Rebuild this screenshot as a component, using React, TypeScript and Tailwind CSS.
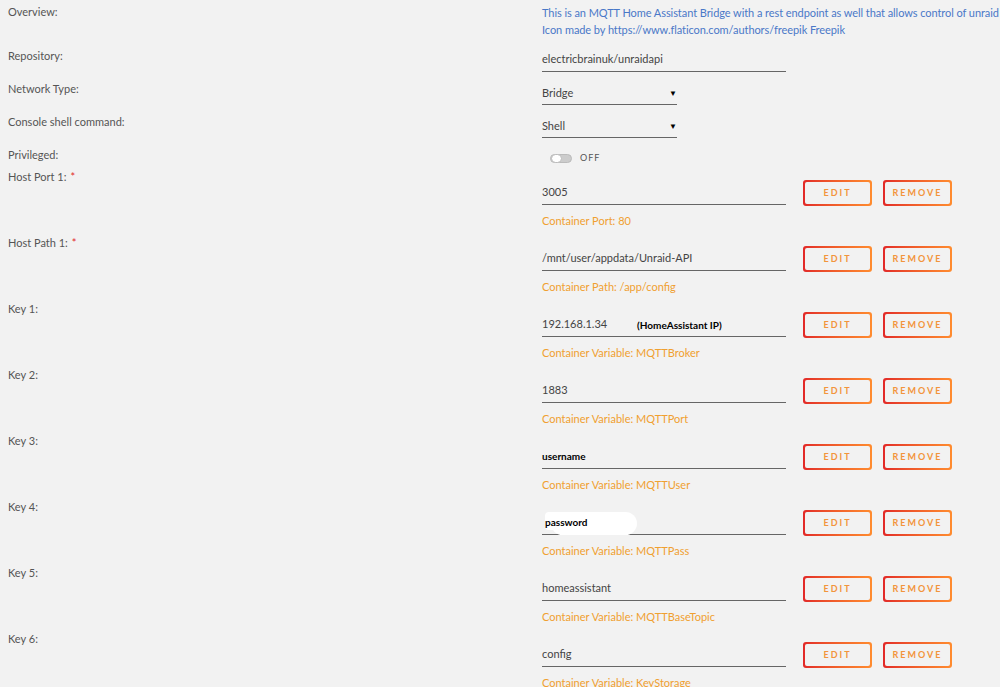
import type { ReactNode } from 'react'

const font = "font-['Lato','Open_Sans',sans-serif]"

function Label({ children, required }: { children: ReactNode; required?: boolean }) {
  return (
    <div className="w-[542px] shrink-0 pl-2 text-[11px] leading-4 text-[#555]">
      {children}
      {required && <span className="ml-1 text-[#e22828]">*</span>}
    </div>
  )
}

function Btn({ children }: { children: ReactNode }) {
  return (
    <div className="rounded-[3px] bg-linear-to-r from-[#e22828] to-[#ff8c2f] p-[2px]">
      <div className="flex h-[22px] w-[65px] items-center justify-center rounded-[2px] bg-[#f2f2f2] text-[9px] font-bold tracking-[2px] text-[#f2953c]">
        {children}
      </div>
    </div>
  )
}

interface Entry {
  label: string
  required?: boolean
  value: ReactNode
  note: string
}

function EntryRow({ label, required, value, note }: Entry) {
  return (
    <div className="flex h-[66px]">
      <Label required={required}>{label}</Label>
      <div className="pt-[11px]">
        <div className="flex items-start">
          <div className="relative h-[25px] w-[244px] border-b border-[#666] pt-[4px] text-[11px] leading-4 text-[#444]">
            {value}
          </div>
          <div className="ml-[17px] flex gap-[11px]">
            <Btn>EDIT</Btn>
            <Btn>REMOVE</Btn>
          </div>
        </div>
        <div className="pt-[7px] text-[11px] leading-4 text-[#f0a030]">{note}</div>
      </div>
    </div>
  )
}

const entries: Entry[] = [
  { label: 'Host Port 1:', required: true, value: '3005', note: 'Container Port: 80' },
  { label: 'Host Path 1:', required: true, value: '/mnt/user/appdata/Unraid-API', note: 'Container Path: /app/config' },
  {
    label: 'Key 1:',
    value: (
      <>
        192.168.1.34
        <span className="absolute left-[95px] top-[5px] text-[10px] font-bold text-black">(HomeAssistant IP)</span>
      </>
    ),
    note: 'Container Variable: MQTTBroker',
  },
  { label: 'Key 2:', value: '1883', note: 'Container Variable: MQTTPort' },
  {
    label: 'Key 3:',
    value: <span className="text-[10px] font-bold text-black">username</span>,
    note: 'Container Variable: MQTTUser',
  },
  {
    label: 'Key 4:',
    value: (
      <>
        {/* white smudge hiding the real value */}
        <span className="absolute left-[9px] top-[2px] h-[23px] w-[86px] rounded-full bg-white" />
        <span className="absolute left-[3px] top-[2px] h-[18px] w-[60px] rounded-sm bg-white" />
        <span className="relative ml-[3px] text-[10px] font-bold text-black">password</span>
      </>
    ),
    note: 'Container Variable: MQTTPass',
  },
  { label: 'Key 5:', value: 'homeassistant', note: 'Container Variable: MQTTBaseTopic' },
  { label: 'Key 6:', value: 'config', note: 'Container Variable: KeyStorage' },
]

function Select({ value }: { value: string }) {
  return (
    <div className="flex h-6 w-[135px] items-start justify-between border-b border-[#666] pt-[4px] text-[11px] leading-4 text-[#444]">
      <span>{value}</span>
      <span className="text-[8px] text-black">▼</span>
    </div>
  )
}

export default function App() {
  return (
    <div className={`h-[687px] w-[1000px] overflow-hidden bg-[#f2f2f2] ${font}`}>
      {/* overview */}
      <div className="flex h-12 pt-1">
        <Label>Overview:</Label>
        <div className="text-[11px] leading-[17px] tracking-[-0.07px] whitespace-nowrap text-[#4a78c8]">
          <div>This is an MQTT Home Assistant Bridge with a rest endpoint as well that allows control of unraid</div>
          <div>Icon made by https://www.flaticon.com/authors/freepik Freepik</div>
        </div>
      </div>

      <div className="flex h-[33px]">
        <Label>Repository:</Label>
        <div className="h-6 w-[244px] border-b border-[#666] pt-[3px] text-[11px] leading-4 text-[#444]">
          electricbrainuk/unraidapi
        </div>
      </div>

      <div className="flex h-[33px]">
        <Label>Network Type:</Label>
        <Select value="Bridge" />
      </div>

      <div className="flex h-[33px]">
        <Label>Console shell command:</Label>
        <Select value="Shell" />
      </div>

      <div className="flex h-[22px]">
        <Label>Privileged:</Label>
        <div className="flex items-center gap-2 pl-2">
          <div className="flex h-[9px] w-[22px] items-center rounded-full border border-[#bbb] bg-[#ccc]">
            <div className="h-[9px] w-[11px] rounded-full border border-[#bbb] bg-white" />
          </div>
          <span className="text-[9px] tracking-[1px] text-[#555]">OFF</span>
        </div>
      </div>

      {entries.map((e) => (
        <EntryRow key={e.label} {...e} />
      ))}
    </div>
  )
}
